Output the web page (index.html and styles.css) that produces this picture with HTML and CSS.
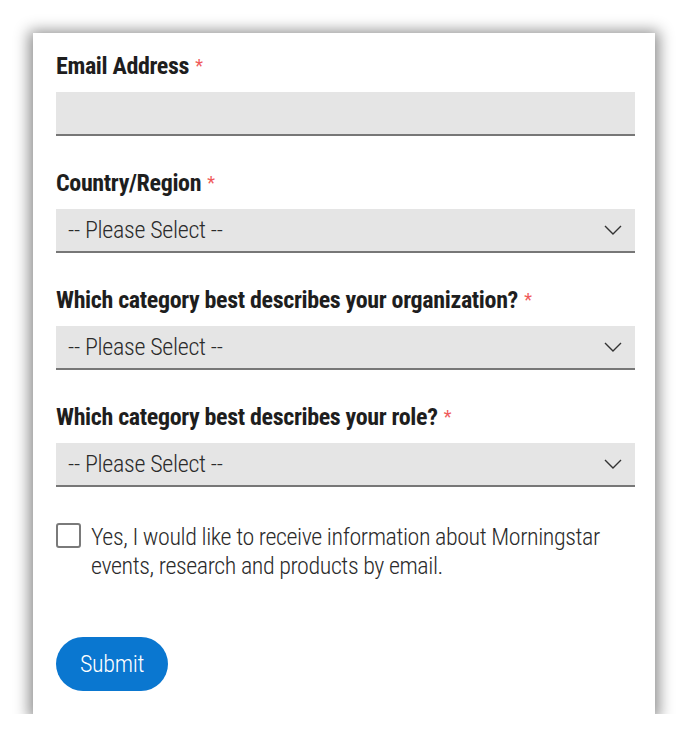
FILE: index.html
```html
<!DOCTYPE html>
<html lang="en">
<head>
<meta charset="utf-8">
<title>Form</title>
<link rel="stylesheet" href="styles.css">
</head>
<body>
<div class="card">
  <form class="form">
    <div class="field">
      <label class="label">Email Address <span class="req">*</span></label>
      <div class="input"></div>
    </div>
    <div class="field">
      <label class="label">Country/Region <span class="req">*</span></label>
      <div class="select"><span class="select-text">-- Please Select --</span>
        <svg class="chev" width="18" height="10" viewBox="0 0 18 10"><path d="M1 1 L9 9 L17 1" fill="none" stroke="#333" stroke-width="1.4"/></svg>
      </div>
    </div>
    <div class="field">
      <label class="label">Which category best describes your organization? <span class="req">*</span></label>
      <div class="select"><span class="select-text">-- Please Select --</span>
        <svg class="chev" width="18" height="10" viewBox="0 0 18 10"><path d="M1 1 L9 9 L17 1" fill="none" stroke="#333" stroke-width="1.4"/></svg>
      </div>
    </div>
    <div class="field">
      <label class="label">Which category best describes your role? <span class="req">*</span></label>
      <div class="select"><span class="select-text">-- Please Select --</span>
        <svg class="chev" width="18" height="10" viewBox="0 0 18 10"><path d="M1 1 L9 9 L17 1" fill="none" stroke="#333" stroke-width="1.4"/></svg>
      </div>
    </div>
    <div class="check-row">
      <span class="box"></span>
      <span class="check-text">Yes, I would like to receive information about Morningstar events, research and products by email.</span>
    </div>
    <div class="actions">
      <span class="btn">Submit</span>
    </div>
  </form>
</div>
</body>
</html>
```

FILE: styles.css
```css
html, body {
  margin: 0;
  padding: 0;
  background: #ffffff;
}
body {
  padding: 33px 0 0 33px;
  font-family: "Roboto Condensed", "Liberation Sans Narrow", "DejaVu Sans Condensed", sans-serif;
}
.card {
  box-sizing: border-box;
  width: 622px;
  height: 681px;
  background: #fff;
  box-shadow: 0 2px 14px 4px rgba(0, 0, 0, 0.45);
  padding: 17px 20px 0 23px;
}
.form {
  display: flex;
  flex-direction: column;
}
.field {
  display: flex;
  flex-direction: column;
  margin-bottom: 31px;
}
.label {
  font-size: 24px;
  line-height: 32px;
  font-weight: 700;
  letter-spacing: -0.35px;
  color: #1e1e1e;
  margin-bottom: 10px;
}
.req {
  color: #ef5b5b;
  font-weight: 400;
  font-size: 18px;
  letter-spacing: 0;
  vertical-align: 2px;
  margin-left: 1px;
}
.input, .select {
  box-sizing: border-box;
  height: 44px;
  background: #e5e5e5;
  border-bottom: 2px solid #777;
}
.select {
  display: flex;
  align-items: center;
  justify-content: space-between;
  padding: 0 13px 0 12px;
}
.select-text {
  font-size: 24px;
  font-weight: 300;
  letter-spacing: -0.3px;
  color: #2b2b2b;
}
.chev {
  display: block;
}
.check-row {
  display: flex;
  align-items: flex-start;
  gap: 10px;
  margin-top: 5px;
}
.box {
  flex: none;
  box-sizing: border-box;
  width: 25px;
  height: 25px;
  border: 2px solid #7a7a7a;
  border-radius: 3px;
}
.check-text {
  font-size: 24px;
  line-height: 29px;
  font-weight: 300;
  letter-spacing: -0.42px;
  color: #2b2b2b;
}
.actions {
  margin-top: 56px;
}
.btn {
  display: inline-flex;
  align-items: center;
  justify-content: center;
  width: 112px;
  height: 54px;
  border-radius: 27px;
  background: #0a77d0;
  color: #fff;
  font-size: 24px;
  font-weight: 300;
  letter-spacing: -0.3px;
}
```
